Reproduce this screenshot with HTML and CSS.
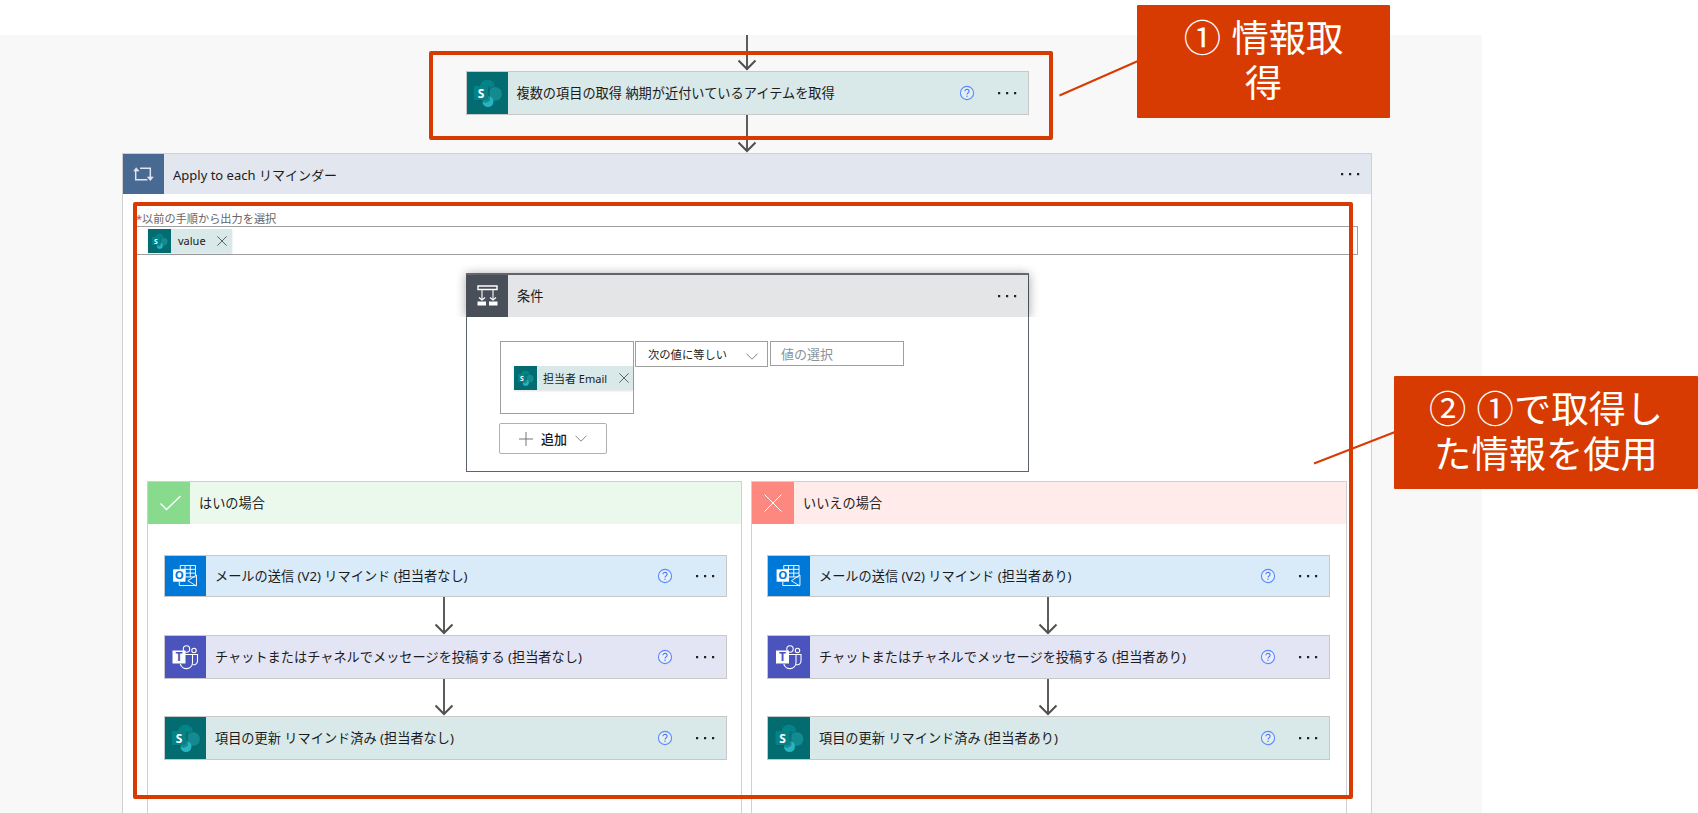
FILE: index.html
```
<!DOCTYPE html>
<html lang="ja">
<head>
<meta charset="utf-8">
<title>リマインダー フロー</title>
<link rel="stylesheet" href="styles.css">
</head>
<body>
<svg class="defs" width="0" height="0">
<defs>
<symbol id="sharepoint" viewBox="0 0 41 42">
<circle cx="20.500" cy="15" r="8" fill="#038387" stroke="#035f63" stroke-width="0.6"/>
<circle cx="28" cy="22" r="7.300" fill="#128a8f" stroke="#0a6166" stroke-width="0.6"/>
<circle cx="21" cy="29.500" r="5.500" fill="#28b4bf"/>
<path d="M9 14h14v14.500a6 6 0 0 1-7 1.500L9 29z" fill="#035a5d" opacity=".45"/>
<rect x="7" y="14" width="14" height="14" rx="1" fill="#038387"/>
<text x="14" y="25.500" text-anchor="middle" class="glyph" fill="#fff">S</text>
</symbol>
<symbol id="outlook" viewBox="0 0 41 42">
<path d="M15 14v-4h16v11M15 14h16M15 18h16M20 10v12M25.500 10v12M20 22h11" fill="none" stroke="#fff" stroke-width="1"/>
<path d="M14 27v4h18V20l-9 6 9 5.500" fill="none" stroke="#fff" stroke-width="1"/>
<rect x="7.500" y="14" width="13" height="13" fill="#fff"/>
<text x="14" y="24.500" text-anchor="middle" class="glyph" fill="#0078d7">O</text>
</symbol>
<symbol id="teams" viewBox="0 0 41 42">
<g fill="none" stroke="#fff" stroke-width="1.100">
<circle cx="21.500" cy="13" r="3.200"/>
<circle cx="29" cy="14.500" r="2.200"/>
<path d="M20 18.500h7.500v8a6.200 6.200 0 0 1-12.200 1.500"/>
<path d="M27.500 18.500h5v6.500a3.800 3.800 0 0 1-5 3.600"/>
</g>
<rect x="7.500" y="14.500" width="13" height="13" fill="#fff"/>
<text x="14" y="25" text-anchor="middle" class="glyph" fill="#4b53bc">T</text>
</symbol>
<symbol id="loop" viewBox="0 0 41 41">
<path d="M12.500 16v10.500h12M17 14.500h10.500v10" fill="none" stroke="#dfe6f0" stroke-width="1.500"/>
<path d="M10.500 17.500l2.500-3.500 3 3.500zM24.500 23.500h6l-3 3.800z" fill="#dfe6f0" stroke="#dfe6f0" stroke-width=".6"/>
</symbol>
<symbol id="condition" viewBox="0 0 41 42">
<path d="M11 11h19v3.500H11z" fill="none" stroke="#fff" stroke-width="1.400"/>
<path d="M15 15v9M26 15v9" stroke="#fff" stroke-width="1.100"/>
<path d="M12 22.500l3 2.500 3-2.500M23 22.500l3 2.500 3-2.500" fill="none" stroke="#fff" stroke-width="1.300"/>
<path d="M10.500 26.500h8.500v4h-8.500zM22 26.500h8.500v4H22z" fill="#fff"/>
</symbol>
<symbol id="check" viewBox="0 0 42 42"><path d="M12.500 21.500l6 6L32.500 14" fill="none" stroke="#fff" stroke-width="1.400"/></symbol>
<symbol id="cross" viewBox="0 0 42 42"><path d="M12.500 12.500l17 17M29.500 12.500l-17 17" fill="none" stroke="#fff" stroke-width="1"/></symbol>
<symbol id="close" viewBox="0 0 10 10"><path d="M.3.300l9.400 9.400M9.700.300L.3 9.700" stroke="#555" stroke-width=".9"/></symbol>
<symbol id="chevron" viewBox="0 0 12 7"><path d="M.5.700L6 6.200 11.500.700" fill="none" stroke="#777" stroke-width=".9"/></symbol>
<symbol id="help" viewBox="0 0 16 16">
<circle cx="8" cy="8" r="6.600" fill="#fff" fill-opacity=".3" stroke="#5b8cff" stroke-width="1.100"/>
<path d="M5.900 6.300a2.100 1.900 0 1 1 3.300 1.500C8.300 8.500 8 8.700 8 9.600" fill="none" stroke="#4a74f5" stroke-width="1.100"/>
<circle cx="8" cy="11.300" r=".7" fill="#4a74f5"/>
</symbol>
<symbol id="dots" viewBox="0 0 20 4"><path d="M1 1h2.200v2.200H1zM9 1h2.200v2.200H9zM17 1h2.200v2.200H17z" fill="#222"/></symbol>
<symbol id="arrowhead" viewBox="0 0 20 12"><path d="M1.500 1.500L10 10l8.500-8.500" fill="none" stroke="#505050" stroke-width="2"/></symbol>
</defs>
</svg>

<main class="canvas">
<div class="arrow first"><svg><use href="#arrowhead"/></svg></div>
<div class="action sharepoint">
<svg class="icon"><use href="#sharepoint"/></svg>
<span class="name">複数の項目の取得 納期が近付いているアイテムを取得</span>
<svg class="help"><use href="#help"/></svg>
<svg class="dots"><use href="#dots"/></svg>
</div>
<div class="arrow long"><svg><use href="#arrowhead"/></svg></div>

<section class="scope">
<header class="scope-header">
<svg class="icon"><use href="#loop"/></svg>
<span class="name">Apply to each リマインダー</span>
<svg class="dots"><use href="#dots"/></svg>
</header>
<div class="output-label"><span class="required">*</span>以前の手順から出力を選択</div>
<div class="output-field">
<span class="token">
<svg class="token-icon"><use href="#sharepoint"/></svg>
<span class="token-name">value</span>
<svg class="close"><use href="#close"/></svg>
</span>
</div>

<section class="condition">
<header class="condition-header">
<svg class="icon"><use href="#condition"/></svg>
<span class="name">条件</span>
<svg class="dots"><use href="#dots"/></svg>
</header>
<div class="expression">
<div class="operand">
<span class="token">
<svg class="token-icon"><use href="#sharepoint"/></svg>
<span class="token-name">担当者 Email</span>
<svg class="close"><use href="#close"/></svg>
</span>
</div>
<div class="operator"><span>次の値に等しい</span><svg class="chevron"><use href="#chevron"/></svg></div>
<div class="value-input">値の選択</div>
</div>
<div class="add">
<svg class="plus" viewBox="0 0 14 14"><path d="M7 0v14M0 7h14" stroke="#777"/></svg>
<span>追加</span>
<svg class="chevron"><use href="#chevron"/></svg>
</div>
</section>

<div class="branches">
<section class="branch yes">
<header class="branch-header">
<svg class="icon"><use href="#check"/></svg>
<span class="name">はいの場合</span>
</header>
<div class="action outlook">
<svg class="icon"><use href="#outlook"/></svg>
<span class="name">メールの送信 (V2) リマインド (担当者なし)</span>
<svg class="help"><use href="#help"/></svg>
<svg class="dots"><use href="#dots"/></svg>
</div>
<div class="arrow long"><svg><use href="#arrowhead"/></svg></div>
<div class="action teams">
<svg class="icon"><use href="#teams"/></svg>
<span class="name">チャットまたはチャネルでメッセージを投稿する (担当者なし)</span>
<svg class="help"><use href="#help"/></svg>
<svg class="dots"><use href="#dots"/></svg>
</div>
<div class="arrow"><svg><use href="#arrowhead"/></svg></div>
<div class="action sharepoint">
<svg class="icon"><use href="#sharepoint"/></svg>
<span class="name">項目の更新 リマインド済み (担当者なし)</span>
<svg class="help"><use href="#help"/></svg>
<svg class="dots"><use href="#dots"/></svg>
</div>
</section>

<section class="branch no">
<header class="branch-header">
<svg class="icon"><use href="#cross"/></svg>
<span class="name">いいえの場合</span>
</header>
<div class="action outlook">
<svg class="icon"><use href="#outlook"/></svg>
<span class="name">メールの送信 (V2) リマインド (担当者あり)</span>
<svg class="help"><use href="#help"/></svg>
<svg class="dots"><use href="#dots"/></svg>
</div>
<div class="arrow long"><svg><use href="#arrowhead"/></svg></div>
<div class="action teams">
<svg class="icon"><use href="#teams"/></svg>
<span class="name">チャットまたはチャネルでメッセージを投稿する (担当者あり)</span>
<svg class="help"><use href="#help"/></svg>
<svg class="dots"><use href="#dots"/></svg>
</div>
<div class="arrow"><svg><use href="#arrowhead"/></svg></div>
<div class="action sharepoint">
<svg class="icon"><use href="#sharepoint"/></svg>
<span class="name">項目の更新 リマインド済み (担当者あり)</span>
<svg class="help"><use href="#help"/></svg>
<svg class="dots"><use href="#dots"/></svg>
</div>
</section>
</div>
</section>
</main>

<!-- annotations over the flow -->
<div class="frame frame-get"></div>
<div class="frame frame-use"></div>
<svg class="leaders" width="1698" height="813"><path d="M1138 61L1059.500 95.500M1395 432L1314 463.500" stroke="#d83b01" stroke-width="2"/></svg>
<div class="callout callout-get">① 情報取<br>得</div>
<div class="callout callout-use">② ①で取得し<br>た情報を使用</div>
</body>
</html>
```
FILE: styles.css
```
* {
	box-sizing: border-box;
}

body {
	position: relative;
	width: 1698px;
	height: 813px;
	margin: 0;
	padding-top: 35px;
	overflow: hidden;
	background-color: #fff;
	color: #1b1b1b;
	font-family: "Noto Sans", "Noto Sans CJK JP", sans-serif;
	font-size: 13px;
}

svg {
	display: block;
	flex: none;
}

.defs {
	position: absolute;
}

.glyph {
	font-family: "Open Sans", sans-serif;
	font-size: 12px;
	font-weight: bold;
}

.canvas {
	display: flex;
	flex-direction: column;
	align-items: center;
	width: 1482px;
	height: 778px;
	padding: 0 110px 0 122px;
	overflow: hidden;
	background-color: #f8f8f8;
}

/* connectors */
.arrow {
	display: flex;
	flex: none;
	justify-content: center;
	align-items: flex-end;
	width: 20px;
	height: 37px;
	margin: 0 auto;
	background: linear-gradient(#5c5c5c, #5c5c5c) center top / 2px 35px no-repeat;
}

.arrow svg {
	width: 20px;
	height: 12px;
}

.arrow.first {
	height: 36px;
}

.arrow.long {
	height: 38px;
}

/* action cards */
.action {
	display: flex;
	flex: none;
	align-items: center;
	width: 563px;
	height: 44px;
	border: 1px solid #c8c8c8;
}

.action .icon,
.scope-header .icon,
.condition-header .icon {
	width: 41px;
	height: 100%;
}

.name {
	flex: 1;
	padding: 0 0 2px 9px;
	font-size: 13.200px;
	white-space: nowrap;
}

.help {
	width: 16px;
	height: 16px;
	margin: 0 22px 1px 0;
}

.dots {
	width: 20px;
	height: 4px;
	margin: 0 11px 1px 0;
}

.action.sharepoint {
	background-color: #d9e8e8;
}

.action.sharepoint .icon,
.token-icon {
	background-color: #036c70;
}

.action.outlook {
	height: 42px;
	background-color: #d9eaf8;
}

.action.outlook .icon {
	background-color: #0078d7;
}

.action.teams {
	background-color: #e4e5f4;
}

.action.teams .icon {
	background-color: #4b53bc;
}

/* apply to each */
.scope {
	flex: none;
	width: 1250px;
	height: 700px;
	border: 1px solid #d0d0d0;
	background-color: #fff;
}

.scope-header {
	display: flex;
	align-items: center;
	height: 40px;
	background-color: #e2e6ee;
}

.scope-header .icon {
	background-color: #486991;
}

.scope-header .name {
	padding-bottom: 0;
	font-size: 13px;
}

.output-label {
	height: 15px;
	margin: 17px 0 0 13px;
	color: #666;
	font-size: 11.200px;
	line-height: 16px;
}

.required {
	display: inline-block;
	width: 6px;
	color: #e03a3a;
}

.output-field {
	width: 1225px;
	height: 29px;
	margin-left: 10px;
	padding: 2px 14px;
	border: 1px solid #9f9f9f;
}

.token {
	display: inline-flex;
	align-items: center;
	height: 24px;
	padding-right: 5px;
	background-color: #d9e8e8;
	font-size: 11px;
	box-shadow: 0 1px 2px rgba(0, 0, 0, .12);
}

.token-icon {
	width: 23px;
	height: 100%;
}

.token-name {
	padding: 0 11px 1px 7px;
	white-space: nowrap;
}

.close {
	width: 10px;
	height: 10px;
}

/* condition */
.condition {
	width: 563px;
	height: 199px;
	margin: 18px 0 0 343px;
	border: 1px solid #5d6470;
	border-top: 2px solid #747a85;
}

.condition-header {
	display: flex;
	align-items: center;
	height: 42px;
	background-color: #e4e5e7;
	box-shadow: 0 0 10px 1px rgba(0, 0, 0, .35);
	clip-path: inset(-12px -12px 0 -12px);
}

.condition-header .icon {
	background-color: #484f58;
}

.expression {
	display: flex;
	align-items: flex-start;
	gap: 1px;
	margin: 24px 0 0 33px;
}

.operand {
	width: 134px;
	height: 73px;
	padding: 24px 0 0 13px;
	border: 1px solid #9f9f9f;
}

.operand .token {
	width: 119px;
	padding-right: 4px;
}

.operand .token-name {
	flex: 1;
	padding-left: 6px;
}

.operator,
.value-input {
	display: flex;
	align-items: center;
	border: 1px solid #9f9f9f;
}

.operator {
	justify-content: space-between;
	width: 133px;
	height: 26px;
	padding: 0 9px 0 12px;
	font-size: 11.300px;
}

.operator .chevron {
	margin-top: 4px;
}

.value-input {
	width: 134px;
	height: 25px;
	margin-left: 1px;
	padding-left: 10px;
	color: #8b929b;
}

.chevron {
	width: 12px;
	height: 7px;
}

.add {
	display: flex;
	align-items: center;
	gap: 8px;
	width: 108px;
	height: 31px;
	margin: 9px 0 0 32px;
	padding-left: 19px;
	border: 1px solid #b0b0b0;
	border-radius: 2px;
	font-weight: 500;
}

.plus {
	width: 14px;
	height: 14px;
}

/* branches */
.branches {
	display: grid;
	grid-template-columns: 595px 596px;
	gap: 9px;
	margin: 9px 0 0 24px;
}

.branch {
	height: 380px;
	border: 1px solid #d0d0d0;
}

.branch-header {
	display: flex;
	align-items: center;
	height: 42px;
	margin-bottom: 31px;
}

.branch-header .icon {
	width: 42px;
	height: 42px;
}

.branch .action {
	margin-left: 16px;
}

.branch .arrow {
	margin-left: 286px;
}

.branch.no .action {
	margin-left: 15px;
}

.branch.no .action .icon {
	width: 42px;
}

.yes .branch-header {
	background-color: #ebf9ed;
}

.yes .branch-header .icon {
	background-color: #88da8d;
}

.no .branch-header {
	background-color: #ffecea;
}

.no .branch-header .icon {
	background-color: #fd8880;
}

/* annotations */
.frame {
	position: absolute;
	border: 4px solid #d83b01;
	border-radius: 2px;
}

.frame-get {
	left: 429px;
	top: 51px;
	width: 624px;
	height: 89px;
}

.frame-use {
	left: 133px;
	top: 202px;
	width: 1220px;
	height: 597px;
}

.leaders {
	position: absolute;
	left: 0;
	top: 0;
}

.callout {
	position: absolute;
	height: 113px;
	padding-top: 12px;
	border-radius: 1px;
	background-color: #d83b01;
	color: #fff;
	font-family: "Liberation Sans", "Noto Sans CJK JP", sans-serif;
	font-size: 37.300px;
	line-height: 45px;
	text-align: center;
	white-space: nowrap;
}

.callout-get {
	left: 1137px;
	top: 5px;
	width: 253px;
}

.callout-use {
	left: 1394px;
	top: 376px;
	width: 304px;
}
```
